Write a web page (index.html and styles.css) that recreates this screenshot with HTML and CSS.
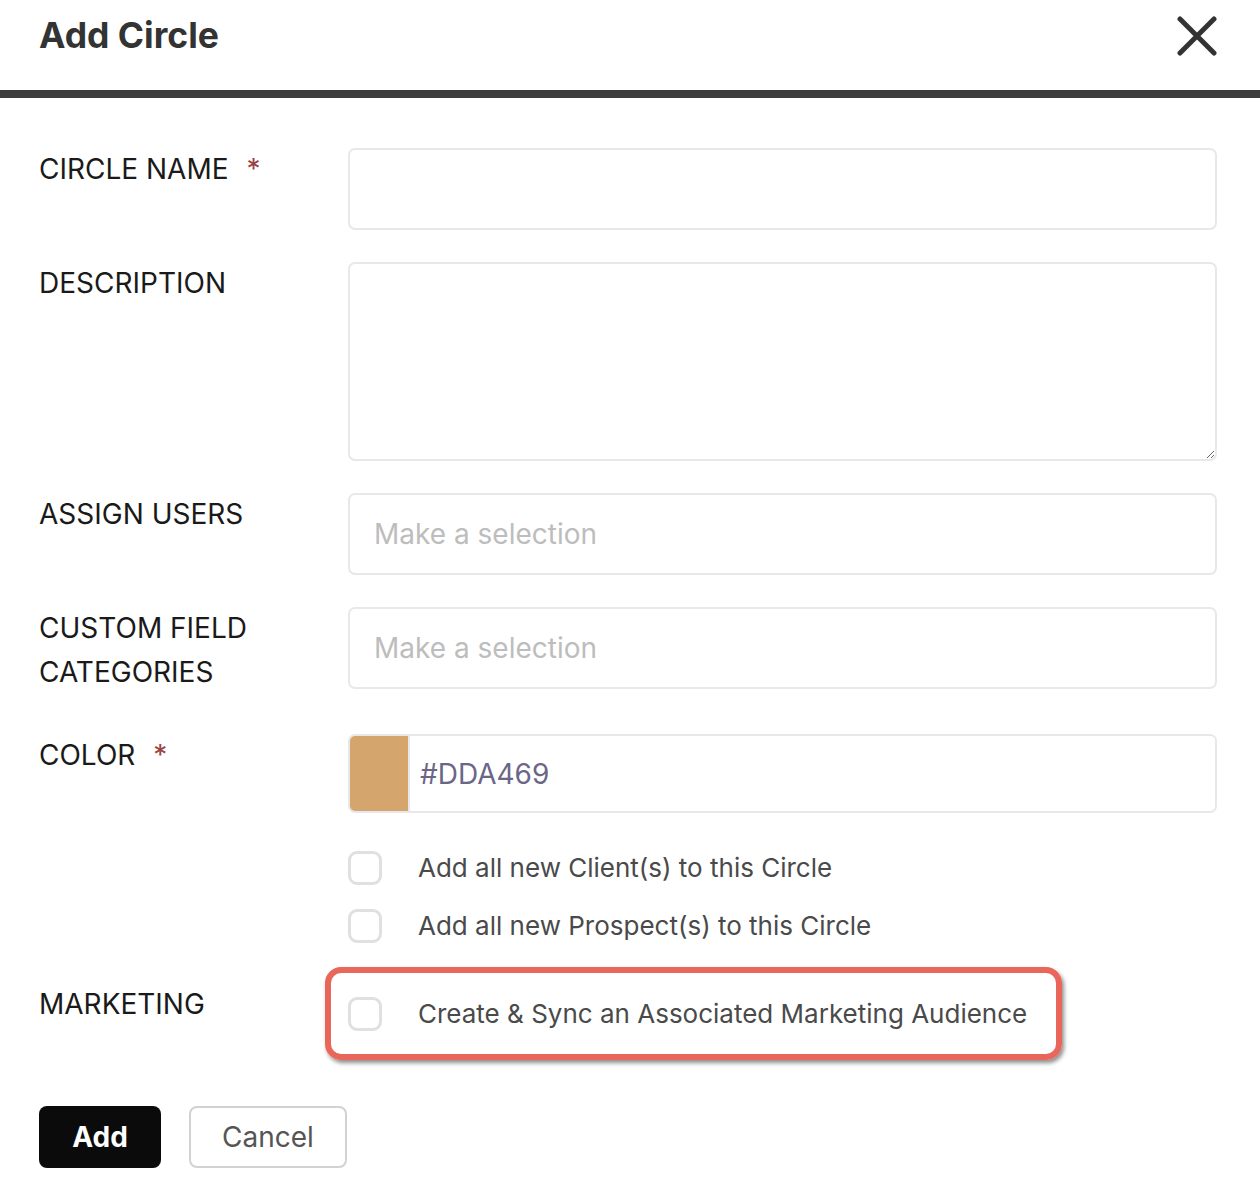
FILE: index.html
```html
<!DOCTYPE html>
<html lang="en">
<head>
    <meta charset="UTF-8">
    <meta name="viewport" content="width=device-width, initial-scale=1.0">
    <title>Add Circle</title>
    <link rel="stylesheet" href="styles.css">
</head>
<body>
<div class="modal-header">
    <h1>Add Circle</h1>
    <button type="button" class="close-btn" aria-label="Close">
        <svg width="40" height="40" viewBox="0 0 40 40">
            <path d="M3 3 L37 37 M37 3 L3 37" stroke="#333" stroke-width="5" stroke-linecap="round" fill="none"/>
        </svg>
    </button>
</div>

<form id="circle-form" class="modal-body">
    <div class="form-row">
        <label for="circle_name">CIRCLE NAME <span class="req">*</span></label>
        <input type="text" id="circle_name" name="circle_name">
    </div>
    <div class="form-row">
        <label for="description">DESCRIPTION</label>
        <textarea id="description" name="description"></textarea>
    </div>
    <div class="form-row">
        <label for="assign_users">ASSIGN USERS</label>
        <input type="text" id="assign_users" name="assign_users" placeholder="Make a selection">
    </div>
    <div class="form-row form-row-tall">
        <label for="custom_fields">CUSTOM FIELD CATEGORIES</label>
        <input type="text" id="custom_fields" name="custom_fields" placeholder="Make a selection">
    </div>
    <div class="form-row form-row-color">
        <label for="color">COLOR <span class="req">*</span></label>
        <div class="color-input">
            <span class="swatch"></span>
            <input type="text" id="color" name="color" value="#DDA469">
        </div>
    </div>
    <div class="form-row form-row-checks">
        <span></span>
        <div class="check-list">
            <label class="check"><input type="checkbox" name="add_clients"><span class="box"></span>Add all new Client(s) to this Circle</label>
            <label class="check"><input type="checkbox" name="add_prospects"><span class="box"></span>Add all new Prospect(s) to this Circle</label>
        </div>
    </div>
    <div class="form-row form-row-marketing">
        <label>MARKETING</label>
        <div>
            <div class="highlight">
                <label class="check"><input type="checkbox" name="marketing"><span class="box"></span>Create &amp; Sync an Associated Marketing Audience</label>
            </div>
        </div>
    </div>
    <div class="actions">
        <button type="submit" class="btn btn-add">Add</button>
        <button type="button" class="btn btn-cancel">Cancel</button>
    </div>
</form>
</body>
</html>
```

FILE: styles.css
```css
body {
    font-family: Inter, "Noto Sans", sans-serif;
    margin: 0;
    background-color: #fff;
    color: #222;
}

.modal-header {
    display: flex;
    justify-content: space-between;
    align-items: flex-start;
    height: 76px;
    padding: 14px 43px 0 39px;
    border-bottom: 8px solid #3d3d3d;
}

.modal-header h1 {
    margin: 0;
    font-size: 35.5px;
    line-height: 44px;
    font-weight: 700;
    color: #333;
}

.close-btn {
    background: none;
    border: none;
    padding: 0;
    margin-top: 2px;
    cursor: pointer;
}

.modal-body {
    padding: 50px 43px 0 39px;
}

.form-row {
    display: grid;
    grid-template-columns: 309px 1fr;
    margin-bottom: 32px;
}

.form-row > label {
    font-size: 28px;
    line-height: 44px;
    margin-top: -1px;
    color: #1a1a1a;
}

.req {
    color: #9a4343;
    margin-left: 10px;
}

input[type="text"], textarea {
    width: 100%;
    height: 82px;
    box-sizing: border-box;
    padding: 0 24px;
    font-family: inherit;
    font-size: 28px;
    color: #333;
    border: 2px solid #e6e8eb;
    border-radius: 7px;
    outline: none;
}

input::placeholder {
    color: #bdbdbd;
}

textarea {
    height: 199px;
    padding: 14px 24px;
    resize: vertical;
    display: block;
}

.form-row-tall {
    margin-bottom: 40px;
}

.form-row-color {
    margin-bottom: 38px;
}

.color-input {
    display: flex;
    height: 79px;
    border: 2px solid #e6e8eb;
    border-radius: 7px;
    overflow: hidden;
    box-sizing: border-box;
}

.swatch {
    width: 58px;
    flex-shrink: 0;
    background-color: #d4a66e;
    border-right: 2px solid #e6e8eb;
}

.color-input input[type="text"] {
    height: 100%;
    border: none;
    border-radius: 0;
    padding: 0 10px;
    color: #6b6688;
}

.form-row-checks {
    margin-bottom: 24px;
}

.check-list {
    display: flex;
    flex-direction: column;
    gap: 24px;
}

.check {
    display: flex;
    align-items: center;
    font-size: 26px;
    line-height: 34px;
    color: #4a4a4a;
    cursor: pointer;
}

.check input {
    display: none;
}

.check .box {
    width: 34px;
    height: 34px;
    box-sizing: border-box;
    border: 3px solid #e0e0e0;
    border-radius: 9px;
    margin-right: 36px;
    flex-shrink: 0;
}

.form-row-marketing {
    margin-bottom: 46px;
}

.form-row-marketing > label {
    padding-top: 16px;
}

.highlight {
    display: inline-flex;
    margin-left: -23px;
    padding: 24px 29px 23px 17px;
    border: 6px solid #e8665a;
    border-radius: 16px;
    box-shadow: 2px 3px 4px rgba(0, 0, 0, 0.45);
}

.actions {
    display: flex;
    gap: 28px;
}

.btn {
    height: 62px;
    font-family: inherit;
    font-size: 28px;
    border-radius: 8px;
    cursor: pointer;
}

.btn-add {
    width: 122px;
    color: white;
    font-weight: 700;
    background-color: #0b0b0b;
    border: none;
}

.btn-cancel {
    width: 158px;
    color: #555;
    background-color: #fff;
    border: 2px solid #d2d2d2;
}
```
